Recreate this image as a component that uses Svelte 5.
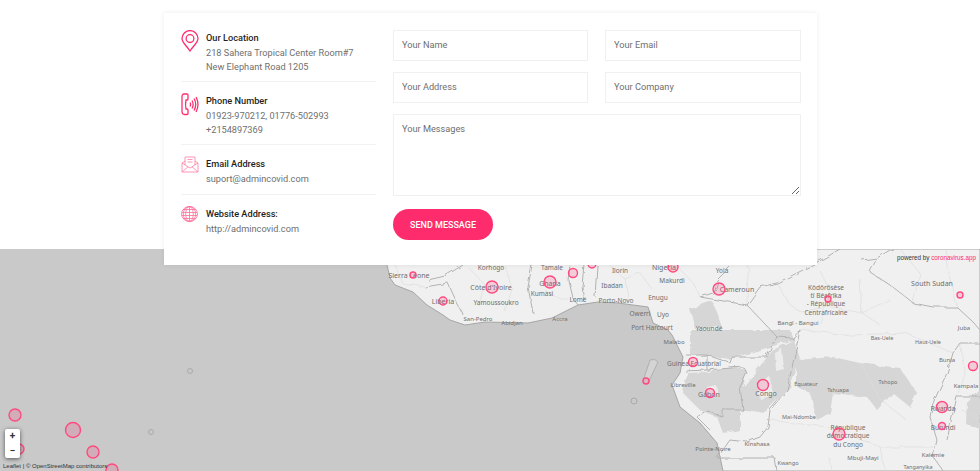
<script>
  const contacts = [
    { icon: 'pin', title: 'Our Location', lines: ['218 Sahera Tropical Center Room#7', 'New Elephant Road 1205'] },
    { icon: 'phone', title: 'Phone Number', lines: ['01923-970212, 01776-502993', '+2154897369'] },
    { icon: 'mail', title: 'Email Address', lines: ['suport@admincovid.com'] },
    { icon: 'globe', title: 'Website Address:', lines: ['http://admincovid.com'] }
  ];

  // x, y, radius in map coordinates (map starts at y=249 on the page)
  const markers = [
    [15, 166, 6], [73, 181, 7.5], [93, 203, 6], [19, 200, 5], [112, 221, 6],
    [413, 26, 3], [443, 52, 4], [492, 38, 6], [550, 33, 6], [573, 24, 4.5],
    [592, 15, 4], [673, 18, 5], [719, 40, 6], [828, 50, 3], [960, 46, 3],
    [693, 113, 4.5], [646, 132, 3], [710, 144, 4.5], [763, 136, 5.5],
    [839, 185, 6], [942, 158, 5.5], [942, 177, 3.5], [973, 117, 4.5]
  ];
  const faint = [[190, 122, 2.5], [151, 183, 2.5], [634, 152, 3]];

  // name, x, baseline y, size
  const labels = [
    ['Sierra Leone', 409, 28.5, 7], ['Liberia', 443, 55, 7], ['Korhogo', 491, 20.5, 6.5], ['Côte d\'Ivoire', 491, 40.5, 7],
    ['Yamoussoukro', 496, 55.5, 6.5], ['Tamale', 552, 20.5, 6.5], ['Ghana', 550, 36.5, 7], ['Kumasi', 542, 46.5, 6.5],
    ['San-Pedro', 478, 71.5, 6], ['Abidjan', 512, 75.5, 6], ['Accra', 560, 71.5, 6], ['Lomé', 578, 52.5, 6.5],
    ['Ilorin', 620, 23.5, 6.5], ['Ibadan', 612, 38.5, 6.5], ['Porto-Novo', 616, 53.5, 6.5],
    ['Enugu', 658, 50.5, 6.5], ['Owerri', 640, 66.5, 6.5], ['Uyo', 663, 67.5, 6.5], ['Port Harcourt', 652, 80.5, 6.5],
    ['Nigeria', 664, 20.5, 7], ['Makurdi', 672, 33.5, 6.5], ['Yola', 722, 23.5, 6.5], ['Cameroun', 737, 42.5, 7],
    ['Yaoundé', 709, 81.5, 6.5], ['Malabo', 674, 94.5, 6], ['Guinea Ecuatorial', 694, 116.5, 6.5], ['Libreville', 683, 137.5, 6],
    ['Gabon', 709, 147.5, 7], ['Congo', 766, 146.5, 7], ['Pointe-Noire', 713, 201.5, 6], ['Kinshasa', 757, 196.5, 6],
    ['Kwango', 788, 215.5, 5.5], ['Mai-Ndombe', 799, 169.5, 5.5], ['Équateur', 806, 136.5, 5.5], ['Tshuapa', 838, 142.5, 5.5],
    ['Tshopo', 888, 134.5, 5.5], ['Bas-Uele', 882, 90.5, 5.5], ['Haut-Uele', 928, 94.5, 5.5], ['République', 848, 180.5, 6.5],
    ['démocratique', 848, 188.8, 6.5], ['du Congo', 848, 197.5, 6.5], ['Mbuji-Mayi', 863, 210.5, 6], ['Kalemie', 933, 207.5, 6],
    ['Bunia', 947, 112.5, 6], ['Kampala', 966, 138.5, 6], ['Rwanda', 943, 161.5, 6.5], ['Burundi', 943, 180.5, 6.5],
    ['Tanganyika', 918, 220, 5.5], ['Kôdörösêse', 826, 40.5, 6.5], ['tî Bêafrîka', 826, 48.8, 6.5], ['- République', 826, 57, 6.5],
    ['Centrafricaine', 826, 65.5, 6.5], ['Bangî - Bangui', 798, 75.5, 6], ['South Sudan', 932, 36.5, 7], ['Juba', 964, 80.5, 6]
  ];

  const forests = [
    'M690 81 L790 81 L793 91 L730 110 L690 105 Z',
    'M687 124 L707 123 L733 118 L747 121 L743 138 L773 101 L793 91 L800 111 L790 138 L770 158 L760 164 L740 161 L740 181 L723 184 L717 168 L700 161 L683 144 Z',
    'M797 111 L833 108 L860 114 L900 119 L917 144 L910 158 L893 144 L877 161 L867 148 L833 144 L830 164 L817 171 L810 144 L797 138 Z',
    'M967 154 L980 141 L980 180 L966 175 Z',
    'M690 60 L712 52 L722 78 L695 80 Z'
  ];

  // lighter patches inside the forest areas
  const clearings = [
    'M757 133 L770 128 L775 146 L760 150 Z',
    'M707 138 L716 136 L718 146 L708 148 Z',
    'M775 104 L782 100 L784 120 L776 122 Z'
  ];

  const borders = [
    'M425 38 L448 34 L457 54 L463 66',
    'M428 31 L445 27 L463 16',
    'M532 16 L528 38 L533 64',
    'M570 16 L568 31 L572 48 L578 56',
    'M585 16 L583 38 L585 54',
    'M597 16 L595 48',
    'M700 48 L713 44 L717 31 L730 18',
    'M700 48 L747 56 L760 38 L777 34 L803 21 L830 6 L840 0',
    'M862 11 L877 9 L870 23 L893 38 L913 54 L933 58 L957 58 L973 73 L980 81',
    'M877 9 L890 1 L893 0',
    'M747 56 L765 75 L777 88',
    'M685 106 L707 106 L730 114 L732 108 L767 108 L773 94 L777 88 L793 89 L800 81',
    'M685 122 L707 121 L707 106',
    'M800 81 L793 114 L787 141 L770 161 L768 178 L760 188 L747 193 L730 191 L725 198 L717 209 L775 209 L777 222',
    'M707 121 L743 118 L747 124 L740 138 L743 161 L723 161 L723 168 L707 161 L697 168 L710 181',
    'M953 104 L947 124 L933 154 L930 168 L937 191 L933 208 L943 222',
    'M953 104 L960 94 L980 94',
    'M957 148 L980 148',
    'M957 148 L953 164 L947 191'
  ];

  const minor = [
    'M395 16 L402 34 L425 38', 'M470 20 L485 36 L480 58', 'M505 16 L512 40 L505 62', 'M545 42 L560 50 L568 50',
    'M610 16 L625 30 L640 24 L652 40', 'M625 30 L628 48', 'M680 20 L695 36 L700 48', 'M740 0 L748 20 L747 56',
    'M777 34 L790 56 L800 62 L830 58 L862 64 L890 50', 'M820 22 L830 42 L820 74', 'M860 30 L862 64 L880 76',
    'M900 0 L920 24 L913 54', 'M945 0 L950 30 L957 58', 'M800 81 L850 86 L905 84 L953 104',
    'M768 171 L810 176 L830 178 L880 198', 'M880 198 L933 198', 'M860 114 L880 150 L905 170',
    'M830 209 L832 222', 'M880 198 L885 222', 'M960 94 L965 120 L957 148', 'M960 160 L980 170'
  ];
</script>

<div class="page">
  <section class="card">
    <div class="info">
      {#each contacts as item}
        <div class="info-row">
          <span class="icon">
            {#if item.icon === 'pin'}
              <svg width="18" height="22" viewBox="0 0 18 22"><path d="M9 21 C6 16 1 13 1 8.600 A8 8 0 0 1 17 8.600 C17 13 12 16 9 21 Z" /><circle cx="9" cy="8.600" r="3.900" /></svg>
            {:else if item.icon === 'phone'}
              <svg width="18" height="23" viewBox="0 0 18 23"><path d="M3 1 H6 Q7 1 7 2 V6 Q7 7 6 7 L5 7 Q4 11.500 5 16 L6 16 Q7 16 7 17 V20.500 Q7 21.500 6 21.500 H3.500 Q1 21.500 1 18 V4 Q1 1 3 1 Z" /><path d="M9 9.500 Q10.200 11.500 9 13.500 M11 7.500 Q13.300 11.500 11 15.500 M13 5.500 Q16.500 11.500 13 17.500 M15 4 Q19 11.500 15 19" /></svg>
            {:else if item.icon === 'mail'}
              <svg class="thin" width="18" height="17" viewBox="0 0 18 17"><path d="M1 7 L4 5 V1 H14 V5 L17 7 V16 H1 Z M1 7 L9 12 L17 7 M1 16 L7 10.800 M17 16 L11 10.800 M4 5 V9 M14 5 V9 M6.500 3.500 H11.500 M6.500 6 H11.500" /></svg>
            {:else}
              <svg class="dense" width="17" height="16" viewBox="0 0 17 16"><ellipse cx="8.500" cy="8" rx="8" ry="7.500" /><ellipse cx="8.500" cy="8" rx="3.800" ry="7.500" /><ellipse cx="8.500" cy="8" rx="6.200" ry="7.500" /><path d="M8.500 .5 V15.500 M2 3.500 H15 M.7 6.500 H16.300 M.7 9.500 H16.300 M2 12.500 H15" /></svg>
            {/if}
          </span>
          <div class="info-text">
            <h4>{item.title}</h4>
            {#each item.lines as line}
              <p>{line}</p>
            {/each}
          </div>
        </div>
      {/each}
    </div>

    <form class="form" onsubmit={(e) => e.preventDefault()}>
      <input placeholder="Your Name" />
      <input placeholder="Your Email" />
      <input placeholder="Your Address" />
      <input placeholder="Your Company" />
      <textarea placeholder="Your Messages"></textarea>
      <button type="submit">SEND MESSAGE</button>
    </form>
  </section>

  <section class="map">
    <svg class="tiles" width="980" height="222" viewBox="0 0 980 222">
      <defs>
        <!-- roughens the hand-placed polygons so borders wander like map tiles -->
        <filter id="rough" x="0" y="0" width="100%" height="100%" filterUnits="userSpaceOnUse" primitiveUnits="userSpaceOnUse">
          <feTurbulence type="fractalNoise" baseFrequency="0.09" numOctaves="3" seed="4" />
          <feDisplacementMap in="SourceGraphic" scale="5" />
          <feGaussianBlur stdDeviation="0.3" />
        </filter>
      </defs>
      <path class="land" d="M385 0 L387 16 L390 29 L395 36 L413 43 L427 56 L443 66 L450 71 L465 76 L485 73 L528 74 L552 69 L578 56 L598 53 L618 54 L648 58 L653 74 L668 81 L672 86 L683 108 L680 124 L672 136 L680 158 L700 174 L717 194 L723 222 L980 222 L980 0 Z" />
      <path class="island" d="M650 111 Q655 109 658 113 L648 134 Q644 136 643 132 Z" />
      <g filter="url(#rough)">
        {#each forests as d}
          <path class="forest" {d} />
        {/each}
        {#each clearings as d}
          <path class="clearing" {d} />
        {/each}
        {#each minor as d}
          <path class="minor" {d} />
        {/each}
        {#each borders as d}
          <path class="border" {d} />
        {/each}
      </g>
      {#each labels as [name, x, y, size]}
        <text {x} {y} font-size={size}>{name}</text>
      {/each}
      {#each faint as [cx, cy, r]}
        <circle class="faint" {cx} {cy} {r} />
      {/each}
      {#each markers as [cx, cy, r]}
        <circle class="marker" {cx} {cy} {r} />
      {/each}
    </svg>

    <div class="zoom">
      <span>+</span>
      <span>−</span>
    </div>
    <div class="attribution">Leaflet | © OpenStreetMap contributors</div>
    <div class="powered">powered by <b>coronavirus.app</b></div>
  </section>
</div>

<style>
  :global(body) {
    margin: 0;
    background: #fff;
    font-family: Roboto, "Liberation Sans", sans-serif;
  }

  .page {
    width: 980px;
    height: 471px;
    overflow: hidden;
    padding-top: 13px;
    box-sizing: border-box;
  }

  .card {
    position: relative;
    z-index: 2;
    width: 653px;
    height: 252px;
    box-sizing: border-box;
    margin-left: 164px;
    padding: 17px 16px 0 17px;
    display: grid;
    grid-template-columns: 195px 408px;
    column-gap: 17px;
    background: #fff;
    box-shadow: 0 0 5px rgba(0, 0, 0, 0.08);
  }

  .info-row {
    display: flex;
    padding: 11px 0 8px;
    border-bottom: 1px solid #f2f2f2;
  }

  .info-row:first-child {
    padding-top: 0;
  }

  .info-row:last-child {
    border-bottom: 0;
  }

  .icon {
    width: 25px;
    flex: none;
  }

  .icon svg {
    display: block;
    fill: none;
    stroke: #ff2c6d;
    stroke-width: 1.3;
  }

  .icon svg.thin {
    stroke: #ff7fa5;
    stroke-width: 0.8;
  }

  .icon svg.dense {
    stroke: #ff6f9b;
    stroke-width: 0.8;
  }

  h4 {
    margin: 0;
    font-size: 9.200px;
    line-height: 16px;
    font-weight: 500;
    color: #1f1f1f;
  }

  p {
    margin: 0;
    font-size: 9.200px;
    line-height: 13.500px;
    color: #6f6f6f;
  }

  .form {
    display: grid;
    grid-template-columns: 195px 196px;
    grid-template-rows: 31px 31px 82px 31px;
    column-gap: 17px;
    row-gap: 11px;
    align-content: start;
  }

  input,
  textarea {
    box-sizing: border-box;
    width: 100%;
    height: 100%;
    padding: 0 8px 2px;
    border: 1px solid #f0f0f0;
    border-radius: 0;
    outline: 0;
    font-family: inherit;
    font-size: 9.200px;
    color: #6f6f6f;
    background: #fff;
  }

  input::placeholder,
  textarea::placeholder {
    color: #6f6f6f;
    opacity: 1;
  }

  textarea {
    grid-column: 1 / 3;
    padding-top: 8px;
    resize: vertical;
  }

  button {
    grid-column: 1;
    width: 100px;
    height: 31px;
    margin-top: 2px;
    padding: 0;
    border: 0;
    border-radius: 16px;
    background: #ff2c6d;
    color: #fff;
    font-family: inherit;
    font-size: 9px;
    font-weight: 500;
  }

  .map {
    position: relative;
    width: 980px;
    height: 222px;
    margin-top: -16px;
    background: #c9c9c9;
  }

  .tiles {
    display: block;
  }

  .land {
    fill: #f0f0f0;
    stroke: #a6a6a6;
    stroke-width: 1;
  }

  .island {
    fill: #d4d4d4;
    stroke: #a8a8a8;
    stroke-width: 0.8;
  }

  .forest {
    fill: #d6d6d6;
  }

  .clearing {
    fill: #ececec;
  }

  .border {
    fill: none;
    stroke: #b2b2b2;
    stroke-width: 1;
  }

  .minor {
    fill: none;
    stroke: #dcdcdc;
    stroke-width: 0.7;
  }

  text {
    font-family: "Noto Sans", "Open Sans", sans-serif;
    fill: #6e6e6e;
    text-anchor: middle;
  }

  .marker {
    fill: rgba(255, 44, 109, 0.18);
    stroke: #ff4a7f;
    stroke-width: 1.4;
  }

  .faint {
    fill: none;
    stroke: #a9a9a9;
    stroke-width: 1;
  }

  .zoom {
    position: absolute;
    left: 5px;
    top: 180px;
    width: 15px;
    height: 29px;
    display: flex;
    flex-direction: column;
    border-radius: 2px;
    background: #fff;
    box-shadow: 0 1px 4px rgba(0, 0, 0, 0.6);
  }

  .zoom span {
    height: 14.500px;
    line-height: 14px;
    text-align: center;
    font-size: 10px;
    font-weight: 700;
    color: #333;
  }

  .attribution {
    position: absolute;
    left: 3px;
    bottom: 0;
    font-family: "Liberation Sans", sans-serif;
    font-size: 6px;
    line-height: 9px;
    color: #333;
    white-space: nowrap;
  }

  .powered {
    position: absolute;
    right: 4px;
    top: 4px;
    font-family: "Liberation Sans", sans-serif;
    font-size: 6.300px;
    line-height: 9px;
    color: #333;
    white-space: nowrap;
  }

  .powered b {
    color: #ff2c6d;
    font-weight: 400;
  }
</style>
